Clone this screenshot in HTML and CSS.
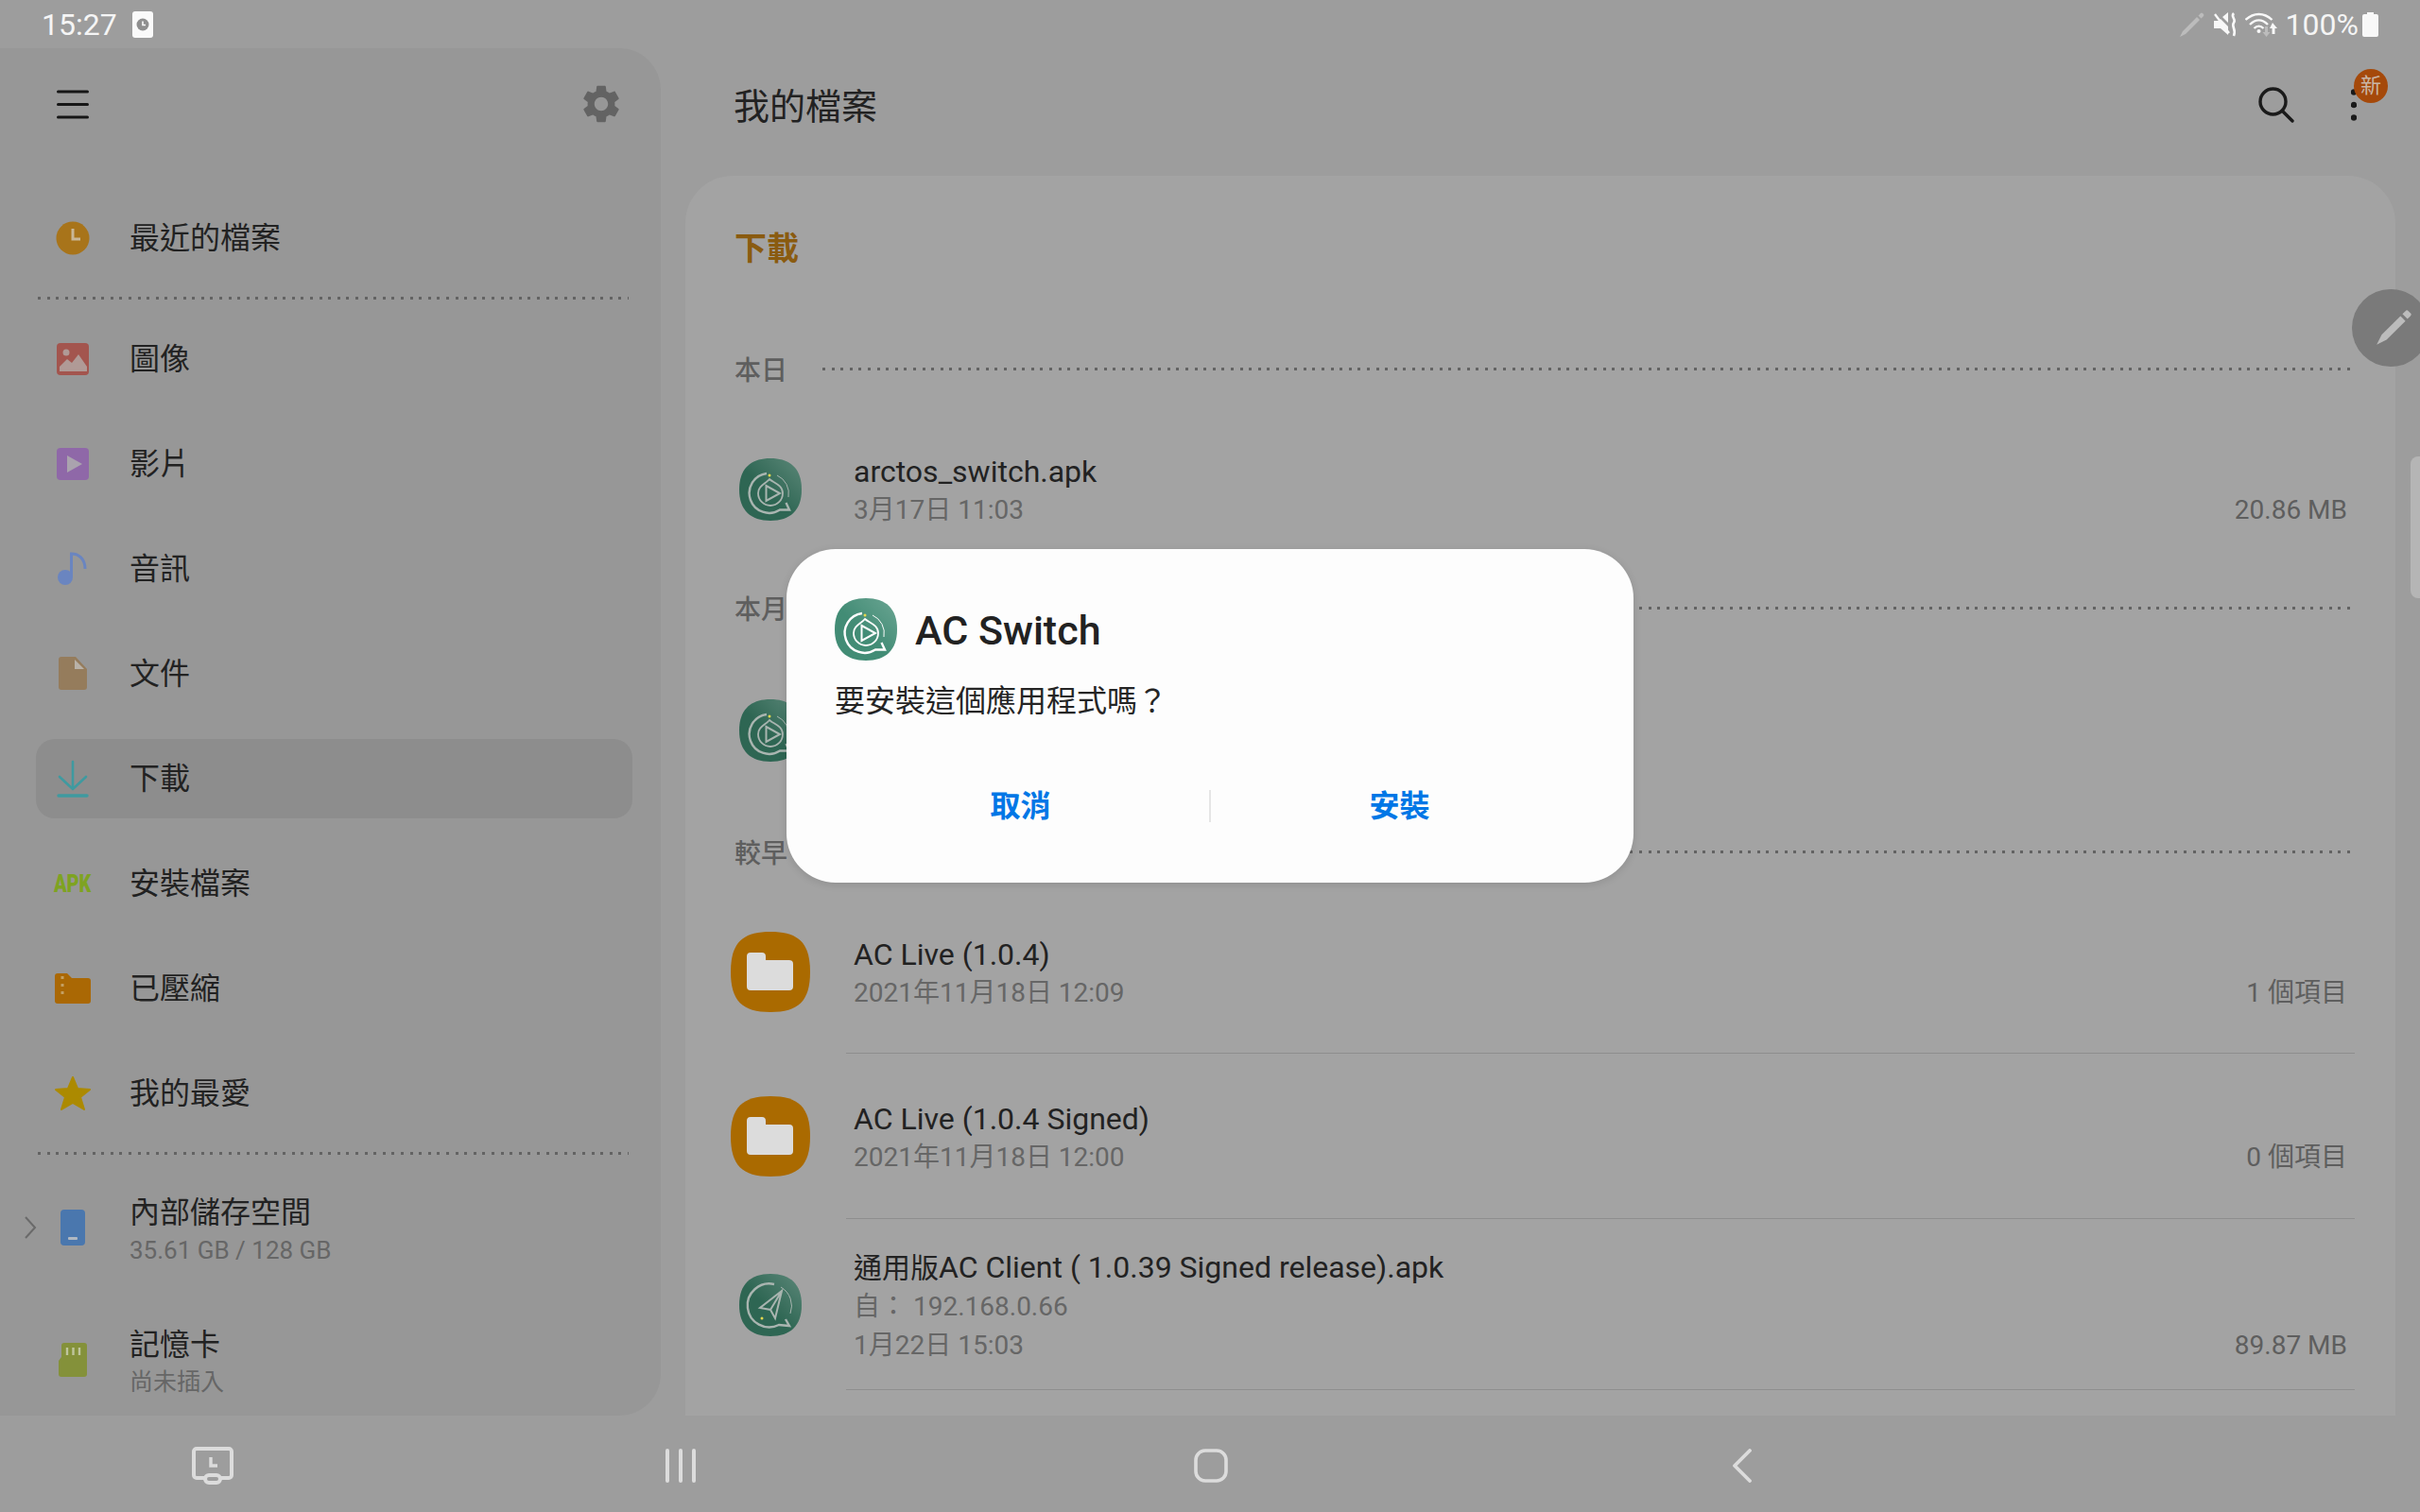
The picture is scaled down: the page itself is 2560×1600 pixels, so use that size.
FILE: index.html
```html
<!DOCTYPE html>
<html lang="zh-Hant">
<head>
  <meta charset="UTF-8" />
  <title>我的檔案</title>
  <link rel="stylesheet" href="styles.css">
</head>
<body>

  <svg class="defs" width="0" height="0">
    <defs>
      <linearGradient id="shine" x1="0" y1="1" x2="1" y2="0">
        <stop offset="0.45" stop-color="#fff" stop-opacity="0"/>
        <stop offset="1" stop-color="#fff" stop-opacity="0.22"/>
      </linearGradient>
      <symbol id="app-switch" viewBox="0 0 66 66">
        <path class="app-bg" d="M33 0C54 0 66 11 66 33S54 66 33 66 0 55 0 33 12 0 33 0Z"/>
        <path fill="url(#shine)" d="M33 0C54 0 66 11 66 33S54 66 33 66 0 55 0 33 12 0 33 0Z"/>
        <path class="app-line" stroke-width="2.4" d="M29 16A21 21 0 1 0 43 54.500L53 54.500L49.500 47"/>
        <path class="app-line" stroke-width="1" d="M40 18A21 21 0 0 1 52 41"/>
        <path class="app-line" stroke-width="1.800" d="M32 22C36 26 46 28 46 37A13 13 0 0 1 20 37C20 29 28 27 32 22Z"/>
        <path class="app-line" stroke-width="2" d="M28.500 29L43 37L28.500 45Z"/>
        <circle cx="32" cy="18" r="1.500" fill="#e5d84e"/>
      </symbol>
      <symbol id="app-client" viewBox="0 0 66 66">
        <path class="app-bg" d="M33 0C54 0 66 11 66 33S54 66 33 66 0 55 0 33 12 0 33 0Z"/>
        <path fill="url(#shine)" d="M33 0C54 0 66 11 66 33S54 66 33 66 0 55 0 33 12 0 33 0Z"/>
        <path class="app-line" stroke-width="2.400" d="M37 11A23 23 0 1 0 42 54L53 55L49 48"/>
        <path class="app-line" stroke-width="1" d="M44 14A23 23 0 0 1 54 42"/>
        <path class="app-line" stroke-width="2" d="M45 18L22 36L33 38L38 47ZM33 38L45 18"/>
        <circle cx="24" cy="47" r="1.500" fill="#e5d84e"/>
      </symbol>
    </defs>
  </svg>

  <div class="screen">
    <header class="status">
      <div class="status-left">
        <span class="clock">15:27</span>
        <svg class="st-note" width="22" height="28" viewBox="0 0 22 28">
          <rect width="22" height="28" rx="3" fill="#fafafa"/>
          <circle cx="11" cy="14" r="6.500" fill="#8f8f8f"/>
          <path d="M11 10.500V14.500H14" fill="none" stroke="#fafafa" stroke-width="1.600"/>
        </svg>
      </div>
      <div class="status-right">
        <svg width="26" height="26" viewBox="0 0 26 26">
          <path fill="#bcbcbc" d="M0 26L3 20L18 5L21 8L6 23ZM19.500 3.500L22 1A1.500 1.500 0 0 1 24 1L25 2A1.500 1.500 0 0 1 25 4L22.500 6.500Z"/>
        </svg>
        <svg class="st-mute" width="25" height="26" viewBox="0 0 25 26">
          <path fill="#f8f8f8" d="M0 9H5L7 7L15 15V24L7 17H0ZM9 5L15 0V11Z"/>
          <path stroke="#f8f8f8" stroke-width="2.400" d="M1 2L16 22"/>
          <path fill="none" stroke="#f8f8f8" stroke-width="2.600" d="M21 1C17 5 24 7 21 11C18 15 24 18 21 25"/>
        </svg>
        <svg class="st-wifi" width="34" height="26" viewBox="0 0 34 26">
          <g fill="none" stroke="#f8f8f8" stroke-width="2.400">
            <path d="M0.500 8C9 0 20 0 28.500 8"/>
            <path d="M5 13C11 7 18 7 24 13"/>
            <path d="M9.500 17C12.500 14 16.500 14 19.500 17"/>
          </g>
          <circle cx="14.500" cy="20" r="2" fill="#f8f8f8"/>
          <path fill="#bcbcbc" d="M21 15H24V21H26.500L22.500 26L18.500 21H21Z"/>
          <path fill="#f8f8f8" d="M29 12L34 18H31.500V24H28.500V18H26Z" transform="translate(0 -1)"/>
        </svg>
        <span class="percent">100%</span>
        <svg class="st-batt" width="17" height="26" viewBox="0 0 17 26">
          <path fill="#f8f8f8" d="M5 0H12V2H15A2 2 0 0 1 17 4V24A2 2 0 0 1 15 26H2A2 2 0 0 1 0 24V4A2 2 0 0 1 2 2H5Z"/>
        </svg>
      </div>
    </header>

    <div class="middle">
      <aside class="sidebar">
        <div class="side-top">
          <svg width="34" height="31" viewBox="0 0 34 31">
            <path stroke="#161616" stroke-width="3" stroke-linecap="round" d="M1.500 2H32.500M1.500 15.500H32.500M1.500 29H32.500"/>
          </svg>
          <svg width="40" height="40" viewBox="2 2 20 20">
            <path fill="#636363" d="M19.140 12.940c.04-.3.06-.61.06-.94 0-.32-.02-.64-.07-.94l2.030-1.580c.18-.14.23-.41.12-.61l-1.920-3.320c-.12-.22-.37-.29-.59-.22l-2.390.96c-.5-.38-1.030-.7-1.620-.94l-.36-2.540c-.04-.24-.24-.41-.48-.41h-3.840c-.24 0-.43.17-.47.41l-.36 2.540c-.59.24-1.130.57-1.620.94l-2.390-.96c-.22-.08-.47 0-.59.22L2.740 8.870c-.12.21-.08.47.12.61l2.030 1.580c-.05.3-.09.63-.09.94s.02.64.07.94l-2.030 1.580c-.18.14-.23.41-.12.61l1.920 3.320c.12.22.37.29.59.22l2.390-.96c.5.38 1.030.7 1.620.94l.36 2.540c.05.24.24.41.48.41h3.840c.24 0 .44-.17.47-.41l.36-2.540c.59-.24 1.130-.56 1.620-.94l2.390.96c.22.08.47 0 .59-.22l1.920-3.320c.12-.22.07-.47-.12-.61l-2.010-1.580zM12 15.600c-1.980 0-3.600-1.620-3.600-3.600s1.620-3.600 3.600-3.600 3.600 1.620 3.600 3.600-1.620 3.600-3.600 3.600z"/>
          </svg>
        </div>

        <nav class="side-list">
          <a class="side-item">
            <span class="side-icon">
              <svg width="36" height="36" viewBox="0 0 36 36">
                <circle cx="18" cy="18" r="17.500" fill="#a8741a"/>
                <path fill="none" stroke="#c9b797" stroke-width="3" d="M18 8V19H26"/>
              </svg>
            </span>
            <span class="side-label">最近的檔案</span>
          </a>
          <div class="dots side-dots"></div>
          <a class="side-item">
            <span class="side-icon">
              <svg width="36" height="36" viewBox="0 0 36 36">
                <rect x="1" y="1" width="34" height="34" rx="4" fill="#a3554e"/>
                <circle cx="11" cy="11" r="3.500" fill="#b09a96"/>
                <path fill="#b09a96" d="M4 31V26L12 18L17 22L24 13L33 26V31Z"/>
              </svg>
            </span>
            <span class="side-label">圖像</span>
          </a>
          <a class="side-item">
            <span class="side-icon">
              <svg width="36" height="36" viewBox="0 0 36 36">
                <rect x="1" y="1" width="34" height="34" rx="4" fill="#8f68a8"/>
                <path fill="#aaa3ae" d="M12 9L28 18L12 27Z"/>
              </svg>
            </span>
            <span class="side-label">影片</span>
          </a>
          <a class="side-item">
            <span class="side-icon">
              <svg width="36" height="36" viewBox="0 0 36 36">
                <circle cx="10" cy="27" r="8" fill="#6a85c0"/>
                <path fill="none" stroke="#6a85c0" stroke-width="3" d="M16.500 27V2C24 2 31 7 31 18"/>
              </svg>
            </span>
            <span class="side-label">音訊</span>
          </a>
          <a class="side-item">
            <span class="side-icon">
              <svg width="36" height="36" viewBox="0 0 36 36">
                <path fill="#957c5c" d="M6 0H21L33 13V32A3 3 0 0 1 30 35H6A3 3 0 0 1 3 32V3A3 3 0 0 1 6 0Z"/>
                <path fill="#b9b2a8" d="M20 3L30 13H20Z"/>
              </svg>
            </span>
            <span class="side-label">文件</span>
          </a>
          <a class="side-item is-current">
            <span class="side-icon">
              <svg width="36" height="40" viewBox="0 0 36 40">
                <path fill="none" stroke="#3f9aa0" stroke-width="2.600" stroke-linecap="round" stroke-linejoin="round" d="M18 2V29M4 18L18 31L32 18"/>
                <path stroke="#3f9aa0" stroke-width="3.400" stroke-linecap="round" d="M3 38H33"/>
              </svg>
            </span>
            <span class="side-label">下載</span>
          </a>
          <a class="side-item">
            <span class="side-icon"><span class="apk">APK</span></span>
            <span class="side-label">安裝檔案</span>
          </a>
          <a class="side-item">
            <span class="side-icon">
              <svg width="38" height="32" viewBox="0 0 38 32">
                <path fill="#aa6804" d="M3 0H13L18 5H35A3 3 0 0 1 38 8V29A3 3 0 0 1 35 32H3A3 3 0 0 1 0 29V3A3 3 0 0 1 3 0Z"/>
                <path stroke="#c4a063" stroke-width="3" stroke-dasharray="3 5" d="M8 3V27"/>
              </svg>
            </span>
            <span class="side-label">已壓縮</span>
          </a>
          <a class="side-item">
            <span class="side-icon">
              <svg width="38" height="36" viewBox="0 0 38 36">
                <path fill="#ac8a00" stroke="#ac8a00" stroke-width="2" stroke-linejoin="round" d="M19 1L24 13L37 14L27 22L31 35L19 28L7 35L11 22L1 14L14 13Z"/>
              </svg>
            </span>
            <span class="side-label">我的最愛</span>
          </a>
          <div class="dots side-dots"></div>
        </nav>

        <div class="storage">
          <a class="side-item storage-item">
            <svg class="chev" width="14" height="24" viewBox="0 0 14 24">
              <path fill="none" stroke="#6a6a6a" stroke-width="2" d="M2 1L12 12L2 23"/>
            </svg>
            <span class="side-icon">
              <svg width="26" height="38" viewBox="0 0 26 38">
                <rect width="26" height="38" rx="4" fill="#4a77ae"/>
                <rect x="8" y="29" width="10" height="3" rx="1" fill="#b0b8c2"/>
              </svg>
            </span>
            <span class="side-text">
              <span class="side-label">內部儲存空間</span>
              <span class="side-sub">35.61 GB / 128 GB</span>
            </span>
          </a>
          <a class="side-item storage-item">
            <span class="side-icon">
              <svg width="30" height="36" viewBox="0 0 30 36">
                <path fill="#84913a" d="M6 0H27A3 3 0 0 1 30 3V33A3 3 0 0 1 27 36H3A3 3 0 0 1 0 33V19L3 15V3A3 3 0 0 1 6 0Z"/>
                <path stroke="#bfc59d" stroke-width="2.400" d="M9 5V13M15.500 5V13M22 5V13"/>
              </svg>
            </span>
            <span class="side-text">
              <span class="side-label">記憶卡</span>
              <span class="side-sub side-sub-cjk">尚未插入</span>
            </span>
          </a>
        </div>
      </aside>

      <main class="content">
        <div class="content-top">
          <h1>我的檔案</h1>
          <div class="actions">
            <svg width="38" height="38" viewBox="0 0 38 38">
              <circle cx="15.500" cy="15.500" r="13.500" fill="none" stroke="#1a1a1a" stroke-width="3.400"/>
              <path stroke="#1a1a1a" stroke-width="3.400" stroke-linecap="round" d="M26 26L36 36"/>
            </svg>
            <div class="more">
              <svg width="6" height="34" viewBox="0 0 6 34">
                <circle cx="3" cy="3.500" r="3.200" fill="#1a1a1a"/>
                <circle cx="3" cy="17" r="3.200" fill="#1a1a1a"/>
                <circle cx="3" cy="30.500" r="3.200" fill="#1a1a1a"/>
              </svg>
              <span class="badge">新</span>
            </div>
          </div>
        </div>

        <section class="panel">
          <h2>下載</h2>

          <div class="group-head"><span>本日</span><div class="dots"></div></div>
          <div class="row row-today">
            <span class="row-icon"><svg class="app-icon" width="66" height="66"><use href="#app-switch"/></svg></span>
            <div class="row-body">
              <div class="row-inner">
                <div class="row-lines">
                  <div class="row-name">arctos_switch.apk</div>
                  <div class="row-sub">3月17日 11:03</div>
                </div>
                <div class="row-size">20.86 MB</div>
              </div>
            </div>
          </div>

          <div class="group-head"><span>本月</span><div class="dots"></div></div>
          <div class="row row-month">
            <span class="row-icon"><svg class="app-icon" width="66" height="66"><use href="#app-switch"/></svg></span>
            <div class="row-body">
              <div class="row-inner row-inner-tall">
                <div class="row-size">18.29 MB</div>
              </div>
            </div>
          </div>

          <div class="group-head group-late"><span>較早</span><div class="dots"></div></div>
          <div class="row row-folder-a has-line">
            <span class="row-icon">
              <svg width="84" height="85" viewBox="0 0 84 85">
                <path fill="#aa6a00" d="M42 0C72 0 84 12 84 42.500S72 85 42 85 0 73 0 42.500 12 0 42 0Z"/>
                <path fill="#dcdcdc" d="M21 22H33A4 4 0 0 1 37 26V30H62A4 4 0 0 1 66 34V58A4 4 0 0 1 62 62H21A4 4 0 0 1 17 58V26A4 4 0 0 1 21 22Z"/>
              </svg>
            </span>
            <div class="row-body">
              <div class="row-inner">
                <div class="row-lines">
                  <div class="row-name">AC Live (1.0.4)</div>
                  <div class="row-sub">2021年11月18日 12:09</div>
                </div>
                <div class="row-size">1 個項目</div>
              </div>
            </div>
          </div>
          <div class="row row-folder-b has-line">
            <span class="row-icon">
              <svg width="84" height="85" viewBox="0 0 84 85">
                <path fill="#aa6a00" d="M42 0C72 0 84 12 84 42.500S72 85 42 85 0 73 0 42.500 12 0 42 0Z"/>
                <path fill="#dcdcdc" d="M21 22H33A4 4 0 0 1 37 26V30H62A4 4 0 0 1 66 34V58A4 4 0 0 1 62 62H21A4 4 0 0 1 17 58V26A4 4 0 0 1 21 22Z"/>
              </svg>
            </span>
            <div class="row-body">
              <div class="row-inner">
                <div class="row-lines">
                  <div class="row-name">AC Live (1.0.4 Signed)</div>
                  <div class="row-sub">2021年11月18日 12:00</div>
                </div>
                <div class="row-size">0 個項目</div>
              </div>
            </div>
          </div>
          <div class="row row-client has-line">
            <span class="row-icon"><svg class="app-icon" width="66" height="66"><use href="#app-client"/></svg></span>
            <div class="row-body">
              <div class="row-inner">
                <div class="row-lines">
                  <div class="row-name"><span class="name-cjk">通用版</span>AC Client ( 1.0.39 Signed release).apk</div>
                  <div class="row-sub">自： 192.168.0.66</div>
                  <div class="row-sub">1月22日 15:03</div>
                </div>
                <div class="row-size">89.87 MB</div>
              </div>
            </div>
          </div>
        </section>
      </main>
    </div>

    <footer class="softkeys">
      <svg width="44" height="40" viewBox="0 0 44 40">
        <path fill="none" stroke="#dcdcdc" stroke-width="4" d="M13 33H5A3 3 0 0 1 2 30V5A3 3 0 0 1 5 2H39A3 3 0 0 1 42 5V30A3 3 0 0 1 39 33H31"/>
        <rect x="14" y="30" width="16" height="8" rx="4" fill="none" stroke="#dcdcdc" stroke-width="4"/>
        <path fill="none" stroke="#dcdcdc" stroke-width="3.400" d="M20 11V20H27"/>
      </svg>
      <svg width="34" height="36" viewBox="0 0 34 36">
        <path stroke="#dcdcdc" stroke-width="4" stroke-linecap="round" d="M3 2V34M17 2V34M31 2V34"/>
      </svg>
      <svg width="36" height="36" viewBox="0 0 36 36">
        <rect x="2" y="2" width="32" height="32" rx="10" fill="none" stroke="#dcdcdc" stroke-width="3.600"/>
      </svg>
      <svg width="22" height="36" viewBox="0 0 22 36">
        <path fill="none" stroke="#dcdcdc" stroke-width="3.800" stroke-linecap="round" stroke-linejoin="round" d="M19 2L3 18L19 34"/>
      </svg>
    </footer>

    <div class="edge-pen">
      <svg width="42" height="42" viewBox="0 0 40 40">
        <path fill="#bcbcbc" d="M3 37L8 27L27 8L32 13L13 32ZM29 6L32 3A2 2 0 0 1 35 3L37 5A2 2 0 0 1 37 8L34 11Z"/>
      </svg>
    </div>
    <div class="edge-handle"></div>

    <div class="overlay">
      <div class="dialog">
        <div class="dialog-head">
          <svg class="app-icon app-bright" width="66" height="66"><use href="#app-switch"/></svg>
          <span class="dialog-title">AC Switch</span>
        </div>
        <p class="dialog-text">要安裝這個應用程式嗎？</p>
        <div class="dialog-actions">
          <button>取消</button>
          <span class="dialog-sep"></span>
          <button>安裝</button>
        </div>
      </div>
    </div>
  </div>

</body>
</html>
```

FILE: styles.css
```css
* {
  box-sizing: border-box;
  font-family: Roboto, 'Noto Sans CJK TC', sans-serif;
}

html, body {
  margin: 0;
  height: 100%;
}

body {
  background: #9d9d9d;
  overflow: hidden;
}

.defs {
  position: absolute;
}

.screen {
  position: relative;
  width: 2560px;
  height: 1600px;
  display: flex;
  flex-direction: column;
  overflow: hidden;
  background: #9d9d9d;
}

/* status bar */
.status {
  height: 51px;
  flex: none;
  padding: 0 44px;
  display: flex;
  justify-content: space-between;
  align-items: center;
  color: #f5f5f5;
  font-size: 32px;
}

.status-left, .status-right {
  display: flex;
  align-items: center;
}

.clock {
  width: 96px;
}

.st-mute { margin-left: 10px; }
.st-wifi { margin-left: 8px; }
.percent { margin-left: 9px; }
.st-batt { margin-left: 4px; }

/* middle */
.middle {
  flex: 1;
  display: flex;
  min-height: 0;
}

.sidebar {
  width: 699px;
  flex: none;
  background: #979797;
  border-radius: 0 44px 44px 0;
  overflow: hidden;
}

.side-top {
  height: 118px;
  padding: 0 43px 0 60px;
  display: flex;
  justify-content: space-between;
  align-items: center;
}

.side-list {
  margin-top: 41px;
  display: flex;
  flex-direction: column;
  gap: 27px;
}

.side-item {
  height: 84px;
  margin: 0 30px 0 38px;
  border-radius: 20px;
  display: flex;
  align-items: center;
  color: #222;
  font-size: 32px;
}

.side-item.is-current {
  background: #8d8d8d;
}

.side-icon {
  width: 78px;
  flex: none;
  display: flex;
  justify-content: center;
  align-items: center;
  margin-right: 21px;
}

.side-label {
  line-height: 40px;
}

.apk {
  display: inline-block;
  font-weight: 900;
  font-size: 25px;
  color: #7ea321;
  transform: scaleX(0.8);
}

.dots {
  height: 3px;
  background: repeating-linear-gradient(90deg, #636363 0 3px, transparent 3px 9.6px);
}

.side-dots {
  margin: -7px 34px -6px 40px;
}

.storage {
  margin-top: 37px;
  display: flex;
  flex-direction: column;
  gap: 40px;
}

.storage-item {
  height: 100px;
}

.storage-item .side-icon {
  margin-bottom: 8px;
}

.chev {
  flex: none;
  margin: 0 -1px 8px -13px;
}

.side-text {
  display: flex;
  flex-direction: column;
}

.side-sub {
  line-height: 40px;
  font-size: 26px;
  color: #666;
}

.side-sub-cjk {
  font-size: 25px;
}

/* content */
.content {
  flex: 1;
  min-width: 0;
  margin-left: 26px;
  margin-right: 26px;
  display: flex;
  flex-direction: column;
}

.content-top {
  height: 135px;
  flex: none;
  position: relative;
  padding-left: 51px;
  display: flex;
  justify-content: space-between;
  align-items: center;
}

h1 {
  margin: 0 0 18px;
  font-size: 38px;
  font-weight: 400;
  color: #222;
}

.actions {
  display: flex;
  align-items: center;
  gap: 60px;
  margin: 0 41px 16px 0;
}

.more {
  position: relative;
  display: flex;
}

.badge {
  position: absolute;
  left: 3px;
  top: -21px;
  width: 36px;
  height: 36px;
  border-radius: 50%;
  background: #a5490a;
  color: #c9b5a6;
  font-size: 22px;
  line-height: 36px;
  text-align: center;
}

.panel {
  flex: 1;
  min-height: 0;
  overflow: hidden;
  background: #a3a3a3;
  border-radius: 50px 50px 0 0;
  padding: 57px 0 0 0;
}

h2 {
  margin: 0 0 77px 52px;
  height: 40px;
  line-height: 40px;
  font-size: 34px;
  font-weight: 700;
  color: #8a5b10;
}

.group-head {
  height: 60px;
  margin: 0 44px 0 52px;
  display: flex;
  align-items: center;
  gap: 37px;
  font-size: 28px;
  font-weight: 500;
  color: #5e5e5e;
}

.group-head .dots {
  flex: 1;
}

.group-late {
  height: 56px;
  margin-bottom: 13px;
}

.row {
  display: flex;
  margin-left: 48px;
  margin-right: 43px;
}

.row-today { height: 191px; margin-top: 2px; }
.row-month { height: 200px; }
.row-folder-a { height: 173px; }
.row-folder-b { height: 175px; }
.row-client { height: 181px; }

.row-icon {
  width: 84px;
  flex: none;
  display: flex;
  justify-content: center;
  align-items: center;
}

.row-body {
  flex: 1;
  min-width: 0;
  margin-left: 38px;
  padding: 0 8px 0 8px;
  display: flex;
  align-items: center;
}

.has-line .row-body {
  border-bottom: 1px solid #8e8e8e;
}

.row-inner {
  flex: 1;
  padding-top: 4px;
  display: flex;
  justify-content: space-between;
  align-items: flex-end;
}

.row-inner-tall {
  height: 120px;
  padding-top: 0;
}

.row-name {
  line-height: 40px;
  font-size: 32px;
  color: #222;
}

.name-cjk {
  font-size: 30px;
}

.row-sub {
  line-height: 41px;
  font-size: 28px;
  color: #666;
}

.row-size {
  line-height: 40px;
  font-size: 28px;
  color: #5e5e5e;
}

.app-icon {
  --app-bg: #2e6653;
  --app-line: #a9b5b0;
}

.app-bright {
  --app-bg: #428c75;
  --app-line: #fdfdfd;
}

.app-bg {
  fill: var(--app-bg);
}

.app-line {
  fill: none;
  stroke: var(--app-line);
}

/* soft keys */
.softkeys {
  height: 102px;
  flex: none;
  padding-top: 3px;
  display: grid;
  grid-template-columns: 450px 540px 582px 542px;
  justify-items: center;
  align-items: center;
}

/* things laid over the page */
.edge-pen {
  position: absolute;
  left: 2488px;
  top: 306px;
  width: 82px;
  height: 82px;
  border-radius: 50%;
  background: #7a7a7a;
  padding: 20px 0 0 23px;
}

.edge-handle {
  position: absolute;
  right: 0;
  top: 483px;
  width: 10px;
  height: 150px;
  background: #b5b5b5;
  border-radius: 8px 0 0 8px;
}

.overlay {
  position: absolute;
  inset: 0;
  padding-bottom: 85px;
  display: flex;
  justify-content: center;
  align-items: center;
}

.dialog {
  width: 896px;
  height: 353px;
  padding: 52px 48px 0;
  background: #fdfdfd;
  border-radius: 52px;
  box-shadow: 0 2px 8px rgba(0,0,0,0.12);
}

.dialog-head {
  margin-left: 3px;
  display: flex;
  align-items: center;
  gap: 19px;
}

.dialog-title {
  margin-top: 2px;
  font-size: 43px;
  font-weight: 500;
  color: #222;
}

.dialog-text {
  margin: 21px 0 0 3px;
  line-height: 45px;
  font-size: 32px;
  color: #252525;
}

.dialog-actions {
  margin-top: 71px;
  display: flex;
  align-items: center;
}

.dialog-actions button {
  flex: 1;
  height: 34px;
  padding: 0;
  border: none;
  background: none;
  font-size: 32px;
  font-weight: 700;
  line-height: 34px;
  color: #0077e6;
}

.dialog-sep {
  width: 2px;
  height: 34px;
  background: #e5e5e5;
}
```
